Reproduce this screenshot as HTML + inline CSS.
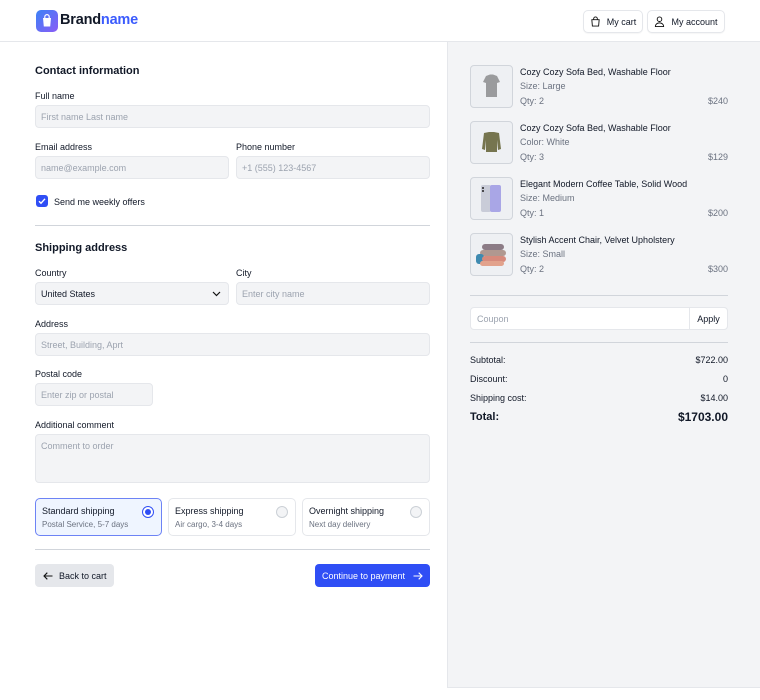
<!DOCTYPE html>
<html><head><style>
*{box-sizing:border-box;margin:0;padding:0}
body{width:760px;height:700px;font-family:"Liberation Sans",sans-serif;color:#111827;background:#fff;position:relative;overflow:hidden;font-size:9px}
.a{position:absolute}
.hdr{left:0;top:0;width:760px;height:42px;border-bottom:1px solid #e5e7eb;background:#fff}
.btn{border:1px solid #e5e7eb;border-radius:5px;background:#fff;height:23px;display:flex;align-items:center;justify-content:center;gap:6px;font-size:9px;box-shadow:0 1px 1px rgba(0,0,0,.04)}
.h2{font-size:11px;font-weight:bold;color:#111827}
.lbl{font-size:9px;color:#111827}
.inp{background:#f3f4f6;border:1px solid #e5e7eb;border-radius:4px;height:23px;padding-left:5px;display:flex;align-items:center;color:#9ca3af;font-size:9px}
.hr{height:1px;background:#d1d5db}
.right{left:447px;top:42px;width:313px;height:646px;background:#f3f4f6;border-left:1px solid #e5e7eb;border-bottom:1px solid #e5e7eb}
.img{width:43px;height:43px;border:1px solid #d1d5db;border-radius:4px;background:#eef0f3}
.t{font-size:9px;color:#111827}
.s{font-size:9px;color:#6b7280}
.opt{height:38px;border:1px solid #e5e7eb;border-radius:5px;padding:7px 6px;background:#fff}
.rad{position:absolute;right:7px;top:7px;width:12px;height:12px;border-radius:50%;border:1px solid #cbd0d6;background:#f3f4f6}
</style></head><body>
<div class="a hdr"></div>
<div class="a" style="left:36px;top:10px;width:22px;height:22px;border-radius:5px;background:linear-gradient(135deg,#3b82f6,#8b5cf6)">
<svg width="22" height="22" viewBox="0 0 22 22"><path d="M7 8h8l-.8 8.5H7.8z" fill="#fff"/><path d="M8.8 8V6.8a2.2 2.2 0 0 1 4.4 0V8" stroke="#fff" stroke-width="1.2" fill="none"/></svg></div>
<div class="a" style="left:60px;top:12px;font-size:14.5px;font-weight:bold;letter-spacing:-.2px">Brand<span style="color:#3b5bfd">name</span></div>
<div class="a btn" style="left:583px;top:10px;width:60px"><svg width="11" height="11" viewBox="0 0 12 12" fill="none" stroke="#111" stroke-width="1"><path d="M2 4h8l-.6 7H2.6z"/><path d="M4 4V3a2 2 0 0 1 4 0v1"/></svg>My cart</div>
<div class="a btn" style="left:647px;top:10px;width:78px"><svg width="11" height="11" viewBox="0 0 12 12" fill="none" stroke="#111" stroke-width="1"><circle cx="6" cy="3.5" r="2.5"/><path d="M1.5 11.5c0-2.5 2-4 4.5-4s4.5 1.5 4.5 4z"/></svg>My account</div>

<div class="a h2" style="left:35px;top:65px">Contact information</div>
<div class="a lbl" style="left:35px;top:91px">Full name</div>
<div class="a inp" style="left:35px;top:105px;width:395px">First name Last name</div>
<div class="a lbl" style="left:35px;top:142px">Email address</div>
<div class="a lbl" style="left:236px;top:142px">Phone number</div>
<div class="a inp" style="left:35px;top:156px;width:194px">name@example.com</div>
<div class="a inp" style="left:236px;top:156px;width:194px">+1 (555) 123-4567</div>
<div class="a" style="left:36px;top:195px;width:12px;height:12px;border-radius:3px;background:#2f4ef5"><svg width="12" height="12" viewBox="0 0 12 12"><path d="M3 6.2l2 2 4-4.4" stroke="#fff" stroke-width="1.4" fill="none"/></svg></div>
<div class="a lbl" style="left:54px;top:197px">Send me weekly offers</div>
<div class="a hr" style="left:35px;top:225px;width:395px"></div>

<div class="a h2" style="left:35px;top:242px">Shipping address</div>
<div class="a lbl" style="left:35px;top:268px">Country</div>
<div class="a lbl" style="left:236px;top:268px">City</div>
<div class="a inp" style="left:35px;top:282px;width:194px;color:#111827">United States<svg class="a" style="right:7px;top:8px" width="9" height="6" viewBox="0 0 9 6"><path d="M1 1l3.5 3.5L8 1" stroke="#111" stroke-width="1.2" fill="none"/></svg></div>
<div class="a inp" style="left:236px;top:282px;width:194px">Enter city name</div>
<div class="a lbl" style="left:35px;top:319px">Address</div>
<div class="a inp" style="left:35px;top:333px;width:395px">Street, Building, Aprt</div>
<div class="a lbl" style="left:35px;top:369px">Postal code</div>
<div class="a inp" style="left:35px;top:383px;width:118px">Enter zip or postal</div>
<div class="a lbl" style="left:35px;top:420px">Additional comment</div>
<div class="a inp" style="left:35px;top:434px;width:395px;height:49px;align-items:flex-start;padding-top:6px">Comment to order</div>

<div class="a opt" style="left:35px;top:498px;width:127px;background:#eff5ff;border-color:#6d83f5"><div class="t">Standard shipping</div><div class="s" style="margin-top:4px;font-size:8px">Postal Service, 5-7 days</div><div class="rad" style="border-color:#2f4ef5;background:#fff"><div style="width:6px;height:6px;border-radius:50%;background:#2f4ef5;margin:2px"></div></div></div>
<div class="a opt" style="left:168px;top:498px;width:128px"><div class="t">Express shipping</div><div class="s" style="margin-top:4px;font-size:8px">Air cargo, 3-4 days</div><div class="rad"></div></div>
<div class="a opt" style="left:302px;top:498px;width:128px"><div class="t">Overnight shipping</div><div class="s" style="margin-top:4px;font-size:8px">Next day delivery</div><div class="rad"></div></div>
<div class="a hr" style="left:35px;top:549px;width:395px"></div>

<div class="a" style="left:35px;top:564px;width:79px;height:23px;border-radius:4px;background:#e5e7eb;display:flex;align-items:center;padding-left:8px;gap:6px"><svg width="10" height="8" viewBox="0 0 10 8"><path d="M9.5 4H1M4.3 .7L1 4l3.3 3.3" stroke="#111" stroke-width="1.1" fill="none"/></svg>Back to cart</div>
<div class="a" style="left:315px;top:564px;width:115px;height:23px;border-radius:4px;background:#2f4ef5;color:#fff;display:flex;align-items:center;padding-left:7px;gap:8px">Continue to payment<svg width="10" height="8" viewBox="0 0 10 8"><path d="M.5 4H9M5.7 .7L9 4 5.7 7.3" stroke="#fff" stroke-width="1.1" fill="none"/></svg></div>

<div class="a right"></div>
<div class="a img" style="left:470px;top:65px"><svg width="41" height="41" viewBox="0 0 41 41"><path d="M15 10l4-1.5h3L26 10l3 6-3 1v14H15V17l-3-1z" fill="#9a9b9d"/></svg></div>
<div class="a t" style="left:520px;top:67px">Cozy Cozy Sofa Bed, Washable Floor</div>
<div class="a s" style="left:520px;top:81px">Size: Large</div>
<div class="a s" style="left:520px;top:96px">Qty: 2</div>
<div class="a s" style="left:690px;top:96px;width:38px;text-align:right">$240</div>

<div class="a img" style="left:470px;top:121px"><svg width="41" height="41" viewBox="0 0 41 41"><path d="M13 11l5-1h5l5 1 2 16-3 1-1-10v12H15V18l-1 10-3-1z" fill="#76754f"/></svg></div>
<div class="a t" style="left:520px;top:123px">Cozy Cozy Sofa Bed, Washable Floor</div>
<div class="a s" style="left:520px;top:137px">Color: White</div>
<div class="a s" style="left:520px;top:152px">Qty: 3</div>
<div class="a s" style="left:690px;top:152px;width:38px;text-align:right">$129</div>

<div class="a img" style="left:470px;top:177px"><svg width="41" height="41" viewBox="0 0 41 41"><rect x="10" y="7" width="10" height="27" rx="2" fill="#c9ccd8"/><rect x="19" y="7" width="11" height="27" rx="2" fill="#a9a6e6"/><circle cx="12" cy="10" r="1" fill="#222"/><circle cx="12" cy="13" r="1" fill="#222"/></svg></div>
<div class="a t" style="left:520px;top:179px">Elegant Modern Coffee Table, Solid Wood</div>
<div class="a s" style="left:520px;top:193px">Size: Medium</div>
<div class="a s" style="left:520px;top:208px">Qty: 1</div>
<div class="a s" style="left:690px;top:208px;width:38px;text-align:right">$200</div>

<div class="a img" style="left:470px;top:233px"><svg width="41" height="41" viewBox="0 0 41 41"><rect x="11" y="10" width="22" height="6" rx="3" fill="#8c7c86"/><rect x="9" y="16" width="26" height="6" rx="3" fill="#b09890"/><rect x="5" y="20" width="8" height="10" rx="3" fill="#3e8ab0"/><rect x="11" y="22" width="24" height="6" rx="3" fill="#d68a7c"/><rect x="9" y="27" width="24" height="5" rx="2.5" fill="#e2a28c"/></svg></div>
<div class="a t" style="left:520px;top:235px">Stylish Accent Chair, Velvet Upholstery</div>
<div class="a s" style="left:520px;top:249px">Size: Small</div>
<div class="a s" style="left:520px;top:264px">Qty: 2</div>
<div class="a s" style="left:690px;top:264px;width:38px;text-align:right">$300</div>

<div class="a hr" style="left:470px;top:295px;width:258px"></div>
<div class="a" style="left:470px;top:307px;width:258px;height:23px;border:1px solid #e5e7eb;border-radius:4px;background:#fff;color:#9ca3af;padding:6px 6px">Coupon</div>
<div class="a" style="left:689px;top:307px;width:39px;height:23px;border:1px solid #e5e7eb;border-radius:0 4px 4px 0;background:#fff;display:flex;align-items:center;justify-content:center">Apply</div>
<div class="a hr" style="left:470px;top:342px;width:258px"></div>
<div class="a t" style="left:470px;top:355px">Subtotal:</div><div class="a t" style="left:650px;top:355px;width:78px;text-align:right">$722.00</div>
<div class="a t" style="left:470px;top:374px">Discount:</div><div class="a t" style="left:650px;top:374px;width:78px;text-align:right">0</div>
<div class="a t" style="left:470px;top:393px">Shipping cost:</div><div class="a t" style="left:650px;top:393px;width:78px;text-align:right">$14.00</div>
<div class="a" style="left:470px;top:411px;font-size:11px;font-weight:bold">Total:</div><div class="a" style="left:640px;top:410px;width:88px;text-align:right;font-size:12px;font-weight:bold">$1703.00</div>
</body></html>
